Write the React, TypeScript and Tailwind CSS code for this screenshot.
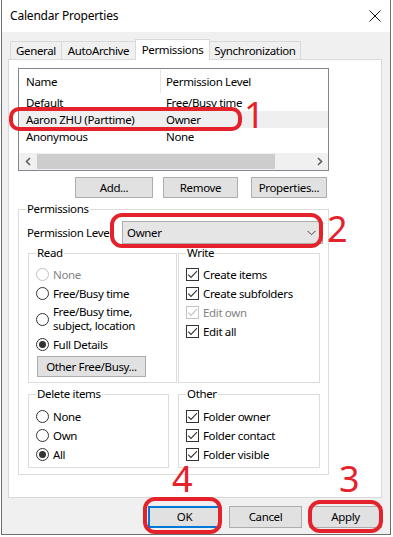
function Radio({ checked = false, disabled = false }: { checked?: boolean; disabled?: boolean }) {
  return (
    <span
      className={
        disabled
          ? "w-[13px] h-[13px] shrink-0 rounded-full border border-[#c2c2c2] bg-white"
          : "w-[13px] h-[13px] shrink-0 rounded-full border border-[#333333] bg-white flex items-center justify-center"
      }
    >
      {checked && <span className="w-[7px] h-[7px] rounded-full bg-[#333333]" />}
    </span>
  );
}

function Check({ disabled = false }: { disabled?: boolean }) {
  return (
    <span
      className={
        disabled
          ? "w-[13px] h-[13px] shrink-0 border border-[#c4c4c4] bg-white flex items-center justify-center"
          : "w-[13px] h-[13px] shrink-0 border border-[#333333] bg-white flex items-center justify-center"
      }
    >
      <svg width="11" height="11" viewBox="0 0 11 11">
        <path d="M1.2 5.6 L4 8.4 L10 2.2" fill="none" stroke={disabled ? "#c4c4c4" : "#333333"} strokeWidth="1.1" />
      </svg>
    </span>
  );
}

function Group({ title, className, children }: { title: string; className: string; children?: React.ReactNode }) {
  return (
    <fieldset className={"border border-[#dcdcdc] " + className}>
      <legend className="ml-[7px] px-[1px] leading-[16px]">{title}</legend>
      {children}
    </fieldset>
  );
}

function Btn({ label, className }: { label: string; className: string }) {
  return (
    <div className={"h-[21px] bg-[#e1e1e1] border border-[#adadad] flex items-center justify-center " + className}>
      {label}
    </div>
  );
}

function Row({ children, dim = false }: { children: React.ReactNode; dim?: boolean }) {
  return (
    <div className={dim ? "h-[19px] flex items-center gap-[4px] text-[#838383]" : "h-[19px] flex items-center gap-[4px]"}>
      {children}
    </div>
  );
}

export default function App() {
  return (
    <div className="relative w-[393px] h-[537px] bg-white overflow-hidden text-[11.5px] tracking-[-0.35px] text-black [font-family:'Noto_Sans',sans-serif]">
      {/* dialog window */}
      <div className="ml-[1px] w-[390px] h-[535px] border-x border-b border-[#6e6e6e] flex flex-col">
        {/* title bar */}
        <div className="h-[32px] bg-white flex items-center justify-between pl-[8px] pr-[8px]">
          <span className="text-[12px] tracking-[-0.2px]">Calendar Properties</span>
          <svg width="12" height="12" viewBox="0 0 12 12" className="mr-[1px]">
            <path d="M0.5 0.5 L11.5 11.5 M11.5 0.5 L0.5 11.5" stroke="#111" strokeWidth="1" />
          </svg>
        </div>

        <div className="flex-1 bg-[#f0f0f0] flex flex-col">
          {/* tabs */}
          <div className="mt-[7px] ml-[8px] h-[20px] flex items-end">
            <div className="h-[18px] w-[51px] border-t border-l border-[#d9d9d9] flex items-center justify-center">General</div>
            <div className="h-[18px] w-[74px] border-t border-l border-[#d9d9d9] flex items-center justify-center">AutoArchive</div>
            <div className="relative z-10 -mb-[1px] h-[21px] w-[75px] border-t border-x border-[#d9d9d9] bg-white flex items-start justify-center pt-[1px]">Permissions</div>
            <div className="h-[18px] w-[91px] border-t border-r border-[#d9d9d9] flex items-center justify-center">Synchronization</div>
          </div>

          {/* tab panel */}
          <div className="ml-[6px] w-[374px] h-[439px] bg-white border border-[#d9d9d9] flex flex-col">
            {/* permission list */}
            <div className="mt-[8px] ml-[9px] w-[311px] h-[103px] border border-[#828790] flex flex-col">
              <div className="h-[25px] flex items-center">
                <div className="w-[141px] pl-[7px]">Name</div>
                <div className="w-px h-[23px] bg-[#e5e5e5]" />
                <div className="pl-[5px]">Permission Level</div>
              </div>
              <div className="h-[17px] flex items-center">
                <div className="w-[142px] pl-[7px]">Default</div>
                <div className="pl-[5px]">Free/Busy time</div>
              </div>
              <div className="h-[17px] flex items-center bg-[#efefef]">
                <div className="w-[142px] pl-[7px]">Aaron ZHU (Parttime)</div>
                <div className="pl-[5px]">Owner</div>
              </div>
              <div className="h-[17px] flex items-center">
                <div className="w-[142px] pl-[7px]">Anonymous</div>
                <div className="pl-[5px]">None</div>
              </div>
              <div className="flex-1" />
              <div className="h-[17px] bg-[#f0f0f0] flex items-center">
                <div className="w-[17px] h-full flex items-center justify-center">
                  <svg width="6" height="9" viewBox="0 0 6 9">
                    <path d="M5 1 L1.5 4.5 L5 8" fill="none" stroke="#606060" strokeWidth="1.6" />
                  </svg>
                </div>
                <div className="ml-[1px] w-[238px] h-[15px] bg-[#cdcdcd]" />
                <div className="flex-1" />
                <div className="w-[17px] h-full flex items-center justify-center">
                  <svg width="6" height="9" viewBox="0 0 6 9">
                    <path d="M1 1 L4.5 4.5 L1 8" fill="none" stroke="#606060" strokeWidth="1.6" />
                  </svg>
                </div>
              </div>
            </div>

            {/* list buttons */}
            <div className="mt-[6px] ml-[66px] flex gap-[10px]">
              <Btn label="Add..." className="w-[78px]" />
              <Btn label="Remove" className="w-[75px]" />
              <Btn label="Properties..." className="ml-[3px] w-[76px]" />
            </div>

            {/* permissions group */}
            <Group title="Permissions" className="mt-[3px] ml-[9px] w-[311px] h-[274px]">
              <div className="mt-[4px] h-[23px] flex items-center">
                <span className="ml-[8px] w-[95px]">Permission Level</span>
                <div className="w-[201px] h-[23px] bg-[#e5e5e5] border border-[#adadad] flex items-center justify-between pl-[4px] pr-[6px]">
                  <span>Owner</span>
                  <svg width="9" height="6" viewBox="0 0 9 6">
                    <path d="M0.5 0.8 L4.5 4.8 L8.5 0.8" fill="none" stroke="#444" strokeWidth="1" />
                  </svg>
                </div>
              </div>

              <div className="mt-[1px] ml-[9px] flex gap-[1px]">
                <Group title="Read" className="w-[149px] h-[138px]">
                  <div className="pt-[4px] pl-[7px]">
                    <Row dim>
                      <Radio disabled />
                      <span>None</span>
                    </Row>
                    <Row>
                      <Radio />
                      <span>Free/Busy time</span>
                    </Row>
                    <div className="h-[32px] flex items-center gap-[4px]">
                      <Radio />
                      <span className="leading-[14px]">
                        Free/Busy time,
                        <br />
                        subject, location
                      </span>
                    </div>
                    <Row>
                      <Radio checked />
                      <span>Full Details</span>
                    </Row>
                    <Btn label="Other Free/Busy..." className="mt-[2px] ml-[1px] w-[109px]" />
                  </div>
                </Group>
                <Group title="Write" className="w-[142px] h-[138px]">
                  <div className="pt-[4px] pl-[7px]">
                    <Row>
                      <Check />
                      <span>Create items</span>
                    </Row>
                    <Row>
                      <Check />
                      <span>Create subfolders</span>
                    </Row>
                    <Row dim>
                      <Check disabled />
                      <span>Edit own</span>
                    </Row>
                    <Row>
                      <Check />
                      <span>Edit all</span>
                    </Row>
                  </div>
                </Group>
              </div>

              <div className="mt-[3px] ml-[9px] flex gap-[9px]">
                <Group title="Delete items" className="w-[141px] h-[82px]">
                  <div className="pt-[5px] pl-[7px]">
                    <Row>
                      <Radio />
                      <span>None</span>
                    </Row>
                    <Row>
                      <Radio />
                      <span>Own</span>
                    </Row>
                    <Row>
                      <Radio checked />
                      <span>All</span>
                    </Row>
                  </div>
                </Group>
                <Group title="Other" className="w-[142px] h-[82px]">
                  <div className="pt-[5px] pl-[7px]">
                    <Row>
                      <Check />
                      <span>Folder owner</span>
                    </Row>
                    <Row>
                      <Check />
                      <span>Folder contact</span>
                    </Row>
                    <Row>
                      <Check />
                      <span>Folder visible</span>
                    </Row>
                  </div>
                </Group>
              </div>
            </Group>
          </div>

          {/* dialog buttons */}
          <div className="mt-[8px] ml-[146px] flex">
            <div className="w-[73px] h-[22px] bg-[#e1e1e1] border-2 border-[#0078d7] flex items-center justify-center">OK</div>
            <Btn label="Cancel" className="ml-[8px] w-[73px] h-[22px]" />
            <Btn label="Apply" className="ml-[7px] w-[73px] h-[22px]" />
          </div>
        </div>
      </div>

      {/* red annotations */}
      <div className="absolute left-[9px] top-[107px] w-[233px] h-[24px] rounded-[10px] border-[4px] border-[#e4222b]" />
      <div className="absolute left-[244px] top-[93px] text-[36px] leading-[44px] tracking-normal text-[#e4222b]">1</div>
      <div className="absolute left-[110px] top-[213px] w-[213px] h-[35px] rounded-[12px] border-[4px] border-[#e4222b]" />
      <div className="absolute left-[327px] top-[207px] text-[36px] leading-[44px] tracking-normal text-[#e4222b]">2</div>
      <div className="absolute left-[308px] top-[500px] w-[75px] h-[33px] rounded-[12px] border-[4px] border-[#e4222b]" />
      <div className="absolute left-[339px] top-[457px] text-[36px] leading-[44px] tracking-normal text-[#e4222b]">3</div>
      <div className="absolute left-[143px] top-[497px] w-[79px] h-[37px] rounded-[12px] border-[4px] border-[#e4222b]" />
      <div className="absolute left-[172px] top-[457px] text-[36px] leading-[44px] tracking-normal text-[#e4222b]">4</div>
    </div>
  );
}
